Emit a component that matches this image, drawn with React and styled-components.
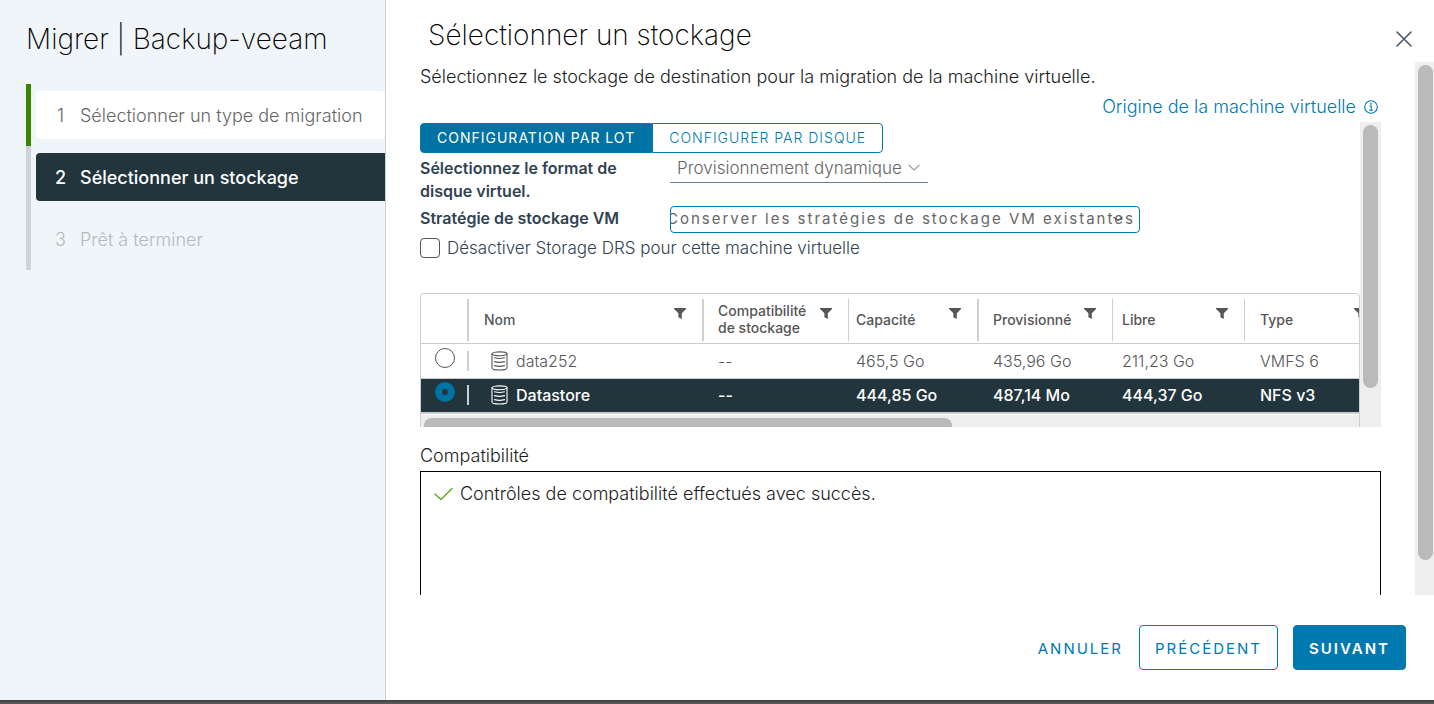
import React, { useState } from "react";
import styled, { createGlobalStyle, css } from "styled-components";

const blue = "#0079b1";
const navy = "#22343c";
const rule = "#c8d1d7";

const GlobalStyle = createGlobalStyle`
  * { box-sizing: border-box; }
  body {
    margin: 0;
    background: #fff;
    color: #1c1c1c;
    font-family: Inter, "Liberation Sans", sans-serif;
    font-size: 18px;
    font-weight: 300;
  }
  button, select, input { font: inherit; }
`;

const Page = styled.div`
  height: 100vh;
  min-height: 480px;
  display: flex;
  flex-direction: column;
  overflow: hidden;
`;

const Wizard = styled.div`
  flex: 1;
  min-height: 0;
  display: flex;
`;

const WindowEdge = styled.div`
  height: 4px;
  flex: none;
  background: #595657;
  border-top: 2px solid #444647;
`;

const Sidebar = styled.aside`
  flex: none;
  width: 386px;
  padding: 21px 0 0 26px;
  background: #eff5f8;
  border-right: 1px solid ${rule};
`;

const WizardTitle = styled.h1`
  margin: 0 0 27px;
  font-size: 28px;
  line-height: 36px;
  font-weight: 200;
  color: #000;
`;

const Steps = styled.ol`
  list-style: none;
  margin: 0;
  padding: 0;
`;

const Step = styled.li`
  padding: 7px 0 7px 5px;
  border-left: 5px solid ${(p) => (p.$state === "done" ? "#3c8500" : "#cbd4d8")};
`;

const StepButton = styled.button`
  display: flex;
  align-items: center;
  gap: 14px;
  width: 100%;
  height: 48px;
  padding: 0 0 0 19px;
  border: 0;
  border-radius: 4px;
  background: transparent;
  color: #b3babd;
  text-align: left;
  white-space: nowrap;
  ${(p) => p.$state === "done" && css`background: #fff; color: #666;`}
  ${(p) =>
    p.$state === "current" &&
    css`background: ${navy}; color: #fff; font-weight: 500; border-radius: 4px 0 0 4px;`}
`;

const StepNumber = styled.span`
  width: 11px;
  text-align: center;
`;

const Main = styled.main`
  flex: 1;
  min-width: 0;
  display: flex;
  flex-direction: column;
`;

const Header = styled.header`
  flex: none;
  height: 62px;
  padding: 17px 20px 0 42px;
  display: flex;
  justify-content: space-between;
`;

const PageTitle = styled.h2`
  margin: 0;
  font-size: 28px;
  line-height: 36px;
  font-weight: 200;
  color: #000;
`;

const CloseButton = styled.button`
  display: flex;
  align-items: center;
  justify-content: center;
  width: 20px;
  height: 44px;
  padding: 0;
  border: 0;
  background: none;
  color: #485969;
`;

const Body = styled.div`
  flex: 1;
  min-height: 0;
  display: flex;
`;

const Content = styled.div`
  flex: 1;
  min-width: 0;
  padding: 0 34px;
  display: flex;
  flex-direction: column;
  overflow: hidden;
`;

const Track = styled.div`
  flex: none;
  width: ${(p) => p.$width}px;
  padding: 3px;
  background: #eee;
`;

const Thumb = styled.div`
  width: 15px;
  height: ${(p) => p.$length};
  border-radius: 8px;
  background: #bababa;
`;

const Intro = styled.p`
  margin: 0;
  line-height: 30px;
`;

const OriginLink = styled.a`
  align-self: flex-end;
  display: flex;
  align-items: center;
  gap: 8px;
  padding-right: 3px;
  line-height: 30px;
  color: ${blue};
  text-decoration: none;
`;

const Panel = styled.div`
  flex: none;
  height: 305px;
  display: flex;
  overflow: hidden;
`;

const PanelContent = styled.div`
  flex: 1;
  min-width: 0;
  padding-top: 1px;
`;

const Toggle = styled.div`
  display: flex;
  width: max-content;
`;

const ToggleButton = styled.button`
  height: 30px;
  padding: 0 16px 2px;
  border: 1px solid ${blue};
  border-radius: ${(p) => (p.$active ? "4px 0 0 4px" : "0 4px 4px 0")};
  background: ${(p) => (p.$active ? "#0072a3" : "#fff")};
  color: ${(p) => (p.$active ? "#fff" : blue)};
  font-size: 14px;
  font-weight: ${(p) => (p.$active ? 400 : 300)};
  letter-spacing: 1px;
`;

const Field = styled.div`
  display: grid;
  grid-template-columns: 250px 1fr;
  align-items: start;
  color: #314351;
`;

const FieldLabel = styled.label`
  max-width: 220px;
  padding-top: ${(p) => p.$top}px;
  font-size: 16px;
  line-height: 23px;
  font-weight: 600;
`;

const SelectWrap = styled.div`
  position: relative;
  width: ${(p) => p.$width}px;
  margin-top: ${(p) => p.$top}px;
  color: ${(p) => (p.$dark ? "#565656" : "#a0a0a0")};

  svg {
    position: absolute;
    top: 9px;
    right: ${(p) => (p.$dark ? 16 : 8)}px;
    pointer-events: none;
  }
`;

const LineSelect = styled.select`
  appearance: none;
  display: block;
  width: 100%;
  height: 28px;
  padding: 0 24px 2px 7px;
  border: 0;
  border-bottom: 1px solid #6b7b83;
  border-radius: 0;
  background: transparent;
  color: #666;
  font-size: 17px;
`;

const BoxSelect = styled.select`
  appearance: none;
  display: block;
  width: 100%;
  height: 27px;
  padding: 0 0 2px;
  border: 1px solid ${blue};
  border-radius: 4px;
  background: transparent;
  color: #666;
  font-size: 15px;
  font-weight: 400;
  letter-spacing: 2px;
  text-indent: -4px;
`;

const CheckLabel = styled.label`
  display: flex;
  align-items: center;
  gap: 7px;
  height: 30px;
  font-size: 17px;
  color: #314351;
`;

const Checkbox = styled.input`
  appearance: none;
  width: 20px;
  height: 20px;
  margin: 0;
  border: 1px solid #565656;
  border-radius: 4px;
  background: #fff;
  &:checked { background: ${blue}; }
`;

const GridFrame = styled.div`
  margin-top: 30px;
  border: 1px solid ${rule};
  border-radius: 4px;
  overflow: hidden;
`;

const Table = styled.table`
  table-layout: fixed;
  width: 962px;
  border-collapse: collapse;
`;

const HeadCell = styled.th`
  height: 49px;
  padding: 4px 0 0;
  border-bottom: 1px solid #ccc;
  color: #565656;
  font-size: 14px;
  line-height: 17px;
  font-weight: 500;
  text-align: left;
`;

const HeadInner = styled.div`
  display: flex;
  align-items: center;
  justify-content: space-between;
  height: 42px;
  padding: 0 16px 2px ${(p) => p.$pad}px;
  border-right: ${(p) => p.$line}px solid ${rule};

  svg {
    flex: none;
    align-self: flex-start;
    margin-top: 9px;
  }
`;

const Row = styled.tr`
  height: 35px;
  background: ${(p) => (p.$selected ? navy : "#fff")};
  color: ${(p) => (p.$selected ? "#fff" : "#565656")};
  font-weight: ${(p) => (p.$selected ? 500 : 300)};
  border-bottom: ${(p) => (p.$selected ? 2 : 1)}px solid #ccc;
`;

const Cell = styled.td`
  padding: 0 0 0 ${(p) => p.$pad}px;
  font-size: 16px;
  line-height: 20px;
  white-space: nowrap;
`;

const RadioSlot = styled.div`
  display: flex;
  align-items: center;
  height: 20px;
  padding-left: 14px;
  border-right: 2px solid ${rule};
`;

const Radio = styled.input`
  appearance: none;
  flex: none;
  width: 20px;
  height: 20px;
  margin: 0 0 6px;
  border: 1px solid #565656;
  border-radius: 50%;
  &:checked {
    border: 7px solid #0072a3;
    background: ${navy};
  }
`;

const NameCell = styled.label`
  display: flex;
  align-items: center;
  gap: 8px;
  padding-left: 7px;
`;

const GridScroll = styled.div`
  height: 21px;
  margin-top: 1px;
  padding: 3px;
  background: #eee;
`;

const GridThumb = styled.div`
  width: 528px;
  height: 15px;
  border-radius: 8px;
  background: #bababa;
`;

const SectionTitle = styled.h3`
  margin: 14px 0 0;
  font-size: 18px;
  line-height: 30px;
  font-weight: 300;
`;

const ResultBox = styled.div`
  flex: none;
  min-height: 160px;
  padding: 7px 12px;
  border: 1px solid #000;
`;

const Result = styled.p`
  display: flex;
  align-items: center;
  gap: 6px;
  margin: 0;
  line-height: 30px;
`;

const Footer = styled.footer`
  flex: none;
  display: flex;
  justify-content: flex-end;
  padding: 30px 28px;
`;

const FooterButton = styled.button`
  height: 45px;
  margin-left: ${(p) => (p.$kind === "solid" ? 15 : 0)}px;
  padding: 2px 15px 0;
  border: 1px solid ${(p) => (p.$kind === "link" ? "transparent" : blue)};
  border-radius: 4px;
  background: ${(p) => (p.$kind === "solid" ? blue : "transparent")};
  color: ${(p) => (p.$kind === "solid" ? "#fff" : blue)};
  font-size: 15px;
  font-weight: ${(p) => (p.$kind === "solid" ? 600 : 400)};
  letter-spacing: 2px;
`;

const CloseIcon = () => (
  <svg width="16" height="16" viewBox="0 0 16 16" fill="none" stroke="currentColor" strokeWidth="1.6" strokeLinecap="round" aria-hidden="true">
    <path d="M1 1l14 14M15 1L1 15" />
  </svg>
);

const InfoIcon = () => (
  <svg width="14" height="14" viewBox="0 0 14 14" fill="none" stroke="currentColor" aria-hidden="true">
    <circle cx="7" cy="7" r="6.3" strokeWidth="1.1" />
    <path d="M5.5 6h1.7v4.2M5.2 10.3h3.8" strokeWidth="1.1" />
    <circle cx="6.9" cy="3.8" r=".9" fill="currentColor" stroke="none" />
  </svg>
);

const Chevron = () => (
  <svg width="12" height="8" viewBox="0 0 12 8" fill="none" stroke="currentColor" strokeWidth="1.2" strokeLinecap="round" strokeLinejoin="round" aria-hidden="true">
    <path d="M1 1.2l5 4.8 5-4.8" />
  </svg>
);

const SmallChevron = () => (
  <svg width="12" height="8" viewBox="0 0 12 8" fill="none" stroke="currentColor" strokeWidth="1.3" strokeLinecap="round" strokeLinejoin="round" aria-hidden="true">
    <path d="M2 2.500l4 3 4-3" />
  </svg>
);

const FilterIcon = () => (
  <svg width="12" height="11" viewBox="0 0 12 11" fill="#565656" aria-hidden="true">
    <path d="M0 0h12v1L7.8 5.2V11L4.400 9.200v-4L0 1z" />
  </svg>
);

const DatastoreIcon = () => (
  <svg width="17" height="20" viewBox="0 0 17 20" fill="none" stroke="currentColor" strokeWidth="1.1" strokeLinecap="round" aria-hidden="true">
    <ellipse cx="8.5" cy="2.8" rx="7.5" ry="1.900" />
    <path d="M1 2.800v14.200c0 1.100 3.200 2 7.500 2s7.500-.9 7.500-2V2.800" />
    <path d="M3.500 6.800c3 .9 7 .9 10 0M3.500 10.600c3 .9 7 .9 10 0M3.500 14.600c3 .9 7 .9 10 0" />
  </svg>
);

const CheckIcon = () => (
  <svg width="21" height="14" viewBox="0 0 21 14" fill="none" stroke="#5aa220" strokeWidth="1.3" strokeLinecap="round" strokeLinejoin="round" aria-hidden="true">
    <path d="M2 7l6 5.500L19 1.500" />
  </svg>
);

const steps = [
  { label: "Sélectionner un type de migration", state: "done" },
  { label: "Sélectionner un stockage", state: "current" },
  { label: "Prêt à terminer", state: "todo" },
];

const columns = [
  { key: "name", label: "Nom", width: 235, pad: 15, line: 2 },
  { key: "compat", label: <>Compatibilité<br />de stockage</>, width: 145, pad: 14, line: 1 },
  { key: "capacity", label: "Capacité", width: 130, pad: 7, line: 2 },
  { key: "provisioned", label: "Provisionné", width: 134, pad: 14, line: 1 },
  { key: "free", label: "Libre", width: 132, pad: 9, line: 1 },
  { key: "type", label: "Type", width: 138, pad: 15, line: 1 },
];

const datastores = [
  { name: "data252", compat: "--", capacity: "465,5 Go", provisioned: "435,96 Go", free: "211,23 Go", type: "VMFS 6" },
  { name: "Datastore", compat: "--", capacity: "444,85 Go", provisioned: "487,14 Mo", free: "444,37 Go", type: "NFS v3" },
];

function DatastoreGrid() {
  const [selected, setSelected] = useState("Datastore");
  return (
    <GridFrame>
      <Table>
        <colgroup>
          <col style={{ width: 48 }} />
          {columns.map((c) => (
            <col key={c.key} style={{ width: c.width }} />
          ))}
        </colgroup>
        <thead>
          <tr>
            <HeadCell aria-label="Sélection">
              <HeadInner $pad={0} $line={2} />
            </HeadCell>
            {columns.map((c) => (
              <HeadCell key={c.key} scope="col">
                <HeadInner $pad={c.pad} $line={c.line}>
                  <span>{c.label}</span>
                  <FilterIcon />
                </HeadInner>
              </HeadCell>
            ))}
          </tr>
        </thead>
        <tbody>
          {datastores.map((d) => (
            <Row key={d.name} $selected={d.name === selected}>
              <Cell $pad={0}>
                <RadioSlot>
                  <Radio
                    type="radio"
                    name="datastore"
                    id={`ds-${d.name}`}
                    checked={d.name === selected}
                    onChange={() => setSelected(d.name)}
                  />
                </RadioSlot>
              </Cell>
              {columns.map((c) => (
                <Cell key={c.key} $pad={c.pad}>
                  {c.key === "name" ? (
                    <NameCell htmlFor={`ds-${d.name}`}>
                      <DatastoreIcon />
                      {d.name}
                    </NameCell>
                  ) : (
                    d[c.key]
                  )}
                </Cell>
              ))}
            </Row>
          ))}
        </tbody>
      </Table>
      <GridScroll>
        <GridThumb />
      </GridScroll>
    </GridFrame>
  );
}

export default function App() {
  const [perDisk, setPerDisk] = useState(false);
  return (
    <Page>
      <GlobalStyle />
      <Wizard>
        <Sidebar>
          <WizardTitle>Migrer | Backup-veeam</WizardTitle>
          <Steps>
            {steps.map((s, i) => (
              <Step key={s.label} $state={s.state}>
                <StepButton type="button" $state={s.state}>
                  <StepNumber>{i + 1}</StepNumber>
                  {s.label}
                </StepButton>
              </Step>
            ))}
          </Steps>
        </Sidebar>
        <Main>
          <Header>
            <PageTitle>Sélectionner un stockage</PageTitle>
            <CloseButton type="button" aria-label="Fermer">
              <CloseIcon />
            </CloseButton>
          </Header>
          <Body>
            <Content>
              <Intro>Sélectionnez le stockage de destination pour la migration de la machine virtuelle.</Intro>
              <OriginLink href="#origine">
                Origine de la machine virtuelle
                <InfoIcon />
              </OriginLink>
              <Panel>
                <PanelContent>
                  <Toggle>
                    <ToggleButton type="button" $active={!perDisk} onClick={() => setPerDisk(false)}>
                      CONFIGURATION PAR LOT
                    </ToggleButton>
                    <ToggleButton type="button" $active={perDisk} onClick={() => setPerDisk(true)}>
                      CONFIGURER PAR DISQUE
                    </ToggleButton>
                  </Toggle>
                  <Field>
                    <FieldLabel htmlFor="format" $top={4}>Sélectionnez le format de disque virtuel.</FieldLabel>
                    <SelectWrap $width={258} $top={2}>
                      <LineSelect id="format">
                        <option>Provisionnement dynamique</option>
                      </LineSelect>
                      <Chevron />
                    </SelectWrap>
                  </Field>
                  <Field>
                    <FieldLabel htmlFor="policy" $top={4}>Stratégie de stockage VM</FieldLabel>
                    <SelectWrap $width={470} $top={3} $dark>
                      <BoxSelect id="policy">
                        <option>Conserver les stratégies de stockage VM existantes</option>
                      </BoxSelect>
                      <SmallChevron />
                    </SelectWrap>
                  </Field>
                  <CheckLabel>
                    <Checkbox type="checkbox" />
                    Désactiver Storage DRS pour cette machine virtuelle
                  </CheckLabel>
                  <DatastoreGrid />
                </PanelContent>
                <Track $width={21}>
                  <Thumb $length="263px" />
                </Track>
              </Panel>
              <SectionTitle>Compatibilité</SectionTitle>
              <ResultBox>
                <Result>
                  <CheckIcon />
                  Contrôles de compatibilité effectués avec succès.
                </Result>
              </ResultBox>
            </Content>
            <Track $width={19}>
              <Thumb $length="94%" />
            </Track>
          </Body>
          <Footer>
            <FooterButton type="button" $kind="link">ANNULER</FooterButton>
            <FooterButton type="button" $kind="outline">PRÉCÉDENT</FooterButton>
            <FooterButton type="button" $kind="solid">SUIVANT</FooterButton>
          </Footer>
        </Main>
      </Wizard>
      <WindowEdge />
    </Page>
  );
}
